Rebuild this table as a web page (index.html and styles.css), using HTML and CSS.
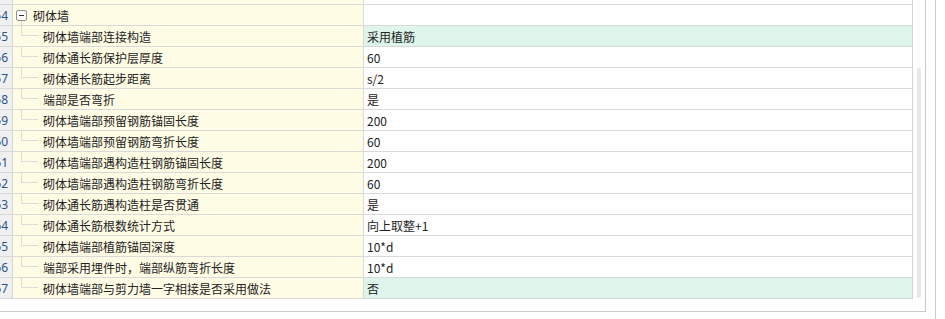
FILE: index.html
```html
<!DOCTYPE html>
<html lang="zh-CN">
<head>
<meta charset="utf-8">
<title>砌体墙</title>
<link rel="stylesheet" href="styles.css">
</head>
<body>
<div class="page">
  <div class="frame">
    <div class="grid">
      <div class="row partial">
        <div class="num"></div>
        <div class="prop"></div>
        <div class="val"></div>
      </div>
      <div class="row">
        <div class="num">54</div>
        <div class="prop group">
          <span class="toggle"><span class="box"><span class="minus"></span></span><span class="stem"></span></span>
          <span class="label">砌体墙</span>
        </div>
        <div class="val"></div>
      </div>
      <div class="row hl">
        <div class="num">55</div>
        <div class="prop"><span class="branch"></span><span class="label">砌体墙端部连接构造</span></div>
        <div class="val">采用植筋</div>
      </div>
      <div class="row">
        <div class="num">56</div>
        <div class="prop"><span class="branch"></span><span class="label">砌体通长筋保护层厚度</span></div>
        <div class="val">60</div>
      </div>
      <div class="row">
        <div class="num">57</div>
        <div class="prop"><span class="branch"></span><span class="label">砌体通长筋起步距离</span></div>
        <div class="val">s/2</div>
      </div>
      <div class="row">
        <div class="num">58</div>
        <div class="prop"><span class="branch"></span><span class="label">端部是否弯折</span></div>
        <div class="val">是</div>
      </div>
      <div class="row">
        <div class="num">59</div>
        <div class="prop"><span class="branch"></span><span class="label">砌体墙端部预留钢筋锚固长度</span></div>
        <div class="val">200</div>
      </div>
      <div class="row">
        <div class="num">60</div>
        <div class="prop"><span class="branch"></span><span class="label">砌体墙端部预留钢筋弯折长度</span></div>
        <div class="val">60</div>
      </div>
      <div class="row">
        <div class="num">61</div>
        <div class="prop"><span class="branch"></span><span class="label">砌体墙端部遇构造柱钢筋锚固长度</span></div>
        <div class="val">200</div>
      </div>
      <div class="row">
        <div class="num">62</div>
        <div class="prop"><span class="branch"></span><span class="label">砌体墙端部遇构造柱钢筋弯折长度</span></div>
        <div class="val">60</div>
      </div>
      <div class="row">
        <div class="num">63</div>
        <div class="prop"><span class="branch"></span><span class="label">砌体通长筋遇构造柱是否贯通</span></div>
        <div class="val">是</div>
      </div>
      <div class="row">
        <div class="num">64</div>
        <div class="prop"><span class="branch"></span><span class="label">砌体通长筋根数统计方式</span></div>
        <div class="val">向上取整+1</div>
      </div>
      <div class="row">
        <div class="num">65</div>
        <div class="prop"><span class="branch"></span><span class="label">砌体墙端部植筋锚固深度</span></div>
        <div class="val">10*d</div>
      </div>
      <div class="row">
        <div class="num">66</div>
        <div class="prop"><span class="branch"></span><span class="label">端部采用埋件时，端部纵筋弯折长度</span></div>
        <div class="val">10*d</div>
      </div>
      <div class="row hl">
        <div class="num">67</div>
        <div class="prop"><span class="branch"></span><span class="label">砌体墙端部与剪力墙一字相接是否采用做法</span></div>
        <div class="val">否</div>
      </div>
    </div>
    <div class="scrollbar"><div class="thumb"></div></div>
  </div>
  <div class="edge"></div>
</div>
</body>
</html>
```

FILE: styles.css
```css
* { box-sizing: border-box; }
html, body { margin: 0; padding: 0; background: #ffffff; }
body {
  font-family: "Noto Sans CJK SC", "Microsoft YaHei", sans-serif;
  font-size: 12px;
  color: #222222;
}
.page {
  display: flex;
  width: 945px;
  height: 319px;
  overflow: hidden;
}
.frame {
  width: 926px;
  height: 312px;
  border-right: 1px solid #c9c9c9;
  border-bottom: 1px solid #c9c9c9;
  display: flex;
  align-items: flex-start;
}
.grid {
  width: 913px;
  height: 299px;
  border-right: 1px solid #d4d4d4;
  display: flex;
  flex-direction: column;
}
.row {
  display: flex;
  height: 21px;
  border-bottom: 1px solid #d9d9d9;
  flex: none;
}
.row.partial { height: 5px; }
.num {
  width: 13px;
  flex: none;
  background: #f0f0f0;
  border-right: 1px solid #d4d4d4;
  display: flex;
  justify-content: flex-end;
  align-items: center;
  padding-right: 4px;
  overflow: hidden;
  white-space: nowrap;
  color: #2d5288;
  font-family: "Noto Sans", "Noto Sans CJK SC", sans-serif;
  font-size: 12px;
}
.prop {
  width: 351px;
  flex: none;
  background: #fffce6;
  border-right: 1px solid #d9d9d9;
  display: flex;
  align-items: center;
  padding-left: 8px;
  white-space: nowrap;
  overflow: hidden;
}
.prop.group { padding-left: 3px; align-items: stretch; }
.toggle {
  display: flex;
  flex-direction: column;
  width: 11px;
  flex: none;
}
.box {
  margin-top: 5px;
  width: 11px;
  height: 11px;
  border: 1px solid #8f8f8f;
  border-radius: 2px;
  background: #ffffff;
  display: flex;
  align-items: center;
  justify-content: center;
  flex: none;
}
.minus {
  width: 5px;
  height: 1px;
  background: #333333;
}
.stem {
  flex: 1;
  margin-left: 5px;
  border-left: 1px solid #dcdcdc;
}
.group .label { margin-left: 6px; display: flex; align-items: center; }
.branch {
  align-self: flex-start;
  width: 17px;
  height: 10px;
  flex: none;
  border-left: 1px solid #dcdcdc;
  border-bottom: 1px solid #dcdcdc;
}
.label { margin-left: 5px; }
.val {
  flex: 1;
  display: flex;
  align-items: center;
  padding-left: 3px;
  white-space: nowrap;
}
.row.hl .val { background: #ddf5ea; }
.scrollbar {
  width: 12px;
  height: 311px;
  padding-top: 68px;
  padding-left: 4px;
  flex: none;
}
.thumb {
  width: 4px;
  height: 230px;
  background: #e8e8e8;
  border-radius: 2px;
}
.edge {
  margin-left: 9px;
  width: 1px;
  height: 319px;
  background: #c9c9c9;
  flex: none;
}
```
